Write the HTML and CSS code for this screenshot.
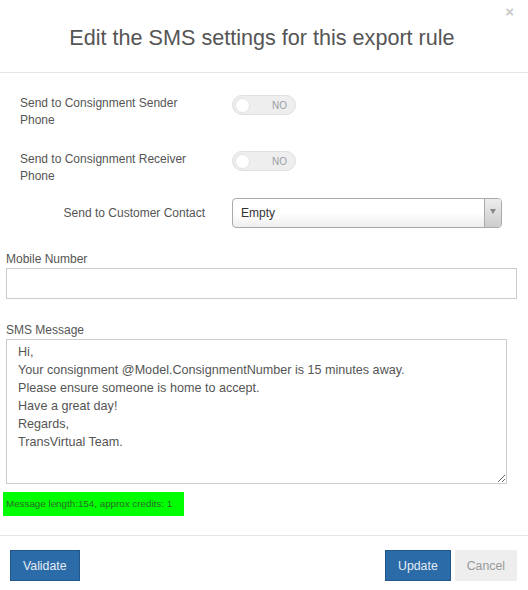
FILE: index.html
```html
<!DOCTYPE html>
<html>
<head>
<meta charset="utf-8">
<link rel="stylesheet" href="styles.css">
</head>
<body>
<div class="modal">
  <div class="modal-header">
    <h4 class="modal-title">Edit the SMS settings for this export rule</h4>
    <span class="close">×</span>
  </div>
  <div class="modal-body">
    <div class="opt-row">
      <div class="opt-label">Send to Consignment Sender Phone</div>
      <div class="toggle"><span class="knob"></span><span class="toggle-text">NO</span></div>
    </div>
    <div class="opt-row">
      <div class="opt-label">Send to Consignment Receiver Phone</div>
      <div class="toggle"><span class="knob"></span><span class="toggle-text">NO</span></div>
    </div>
    <div class="opt-row opt-row-center">
      <div class="opt-label opt-label-right">Send to Customer Contact</div>
      <div class="select">
        <span class="select-value">Empty</span>
        <span class="select-arrow"><span class="tri"></span></span>
      </div>
    </div>
    <label class="field-label">Mobile Number</label>
    <div class="input"></div>
    <label class="field-label">SMS Message</label>
    <textarea class="textarea">Hi,
Your consignment @Model.ConsignmentNumber is 15 minutes away.
Please ensure someone is home to accept.
Have a great day!
Regards,
TransVirtual Team.</textarea>
    <div class="msg-info">Message length:154, approx credits: 1</div>
  </div>
  <div class="modal-footer">
    <button class="btn btn-primary">Validate</button>
    <div class="footer-right">
      <button class="btn btn-primary">Update</button>
      <button class="btn btn-default">Cancel</button>
    </div>
  </div>
</div>
</body>
</html>
```
FILE: styles.css
```css
* { box-sizing: border-box; }
body {
  margin: 0;
  background: #fff;
  font-family: "Liberation Sans", Arial, sans-serif;
  color: #555;
}
.modal { width: 528px; }
.modal-header {
  position: relative;
  height: 73px;
  border-bottom: 1px solid #e5e5e5;
  display: flex;
  align-items: center;
  justify-content: center;
}
.modal-title {
  margin: 0;
  font-size: 21.6px;
  font-weight: normal;
  color: #555;
  padding-top: 4px;
  padding-right: 4px;
}
.close {
  position: absolute;
  right: 14px;
  top: 3px;
  font-size: 15px;
  color: #c8c8c8;
  font-weight: bold;
}
.modal-body {
  padding: 22px 11px 19px 6px;
}
.opt-row {
  display: grid;
  grid-template-columns: 200px 1fr;
  column-gap: 12px;
  padding-left: 14px;
  align-items: start;
  margin-bottom: 22px;
}
.opt-row-center { align-items: center; margin-top: -9px; margin-bottom: 0; }
.opt-label {
  font-size: 12px;
  line-height: 17px;
  color: #555;
  padding-right: 25px;
}
.opt-label-right { text-align: right; padding-right: 15px; }
.toggle {
  width: 64px;
  height: 20px;
  border: 1px solid #e0e0e0;
  background: #eee;
  border-radius: 10px;
  display: flex;
  align-items: center;
  justify-content: space-between;
  padding: 0 8px 0 2px;
}
.knob {
  width: 15px;
  height: 15px;
  border-radius: 50%;
  background: #fff;
  border: 1px solid #e2e2e2;
}
.toggle-text {
  font-size: 10px;
  color: #9aa0a8;
}
.select {
  width: 270px;
  height: 30px;
  border: 1px solid #aaa;
  border-radius: 4px;
  background: linear-gradient(#fff 0%, #fff 50%, #eee 100%);
  display: flex;
  align-items: center;
  justify-content: space-between;
  overflow: hidden;
}
.select-value {
  font-size: 12px;
  color: #333;
  padding-left: 8px;
}
.select-arrow {
  width: 17px;
  height: 100%;
  border-left: 1px solid #aaa;
  background: linear-gradient(#eee, #ccc);
  display: flex;
  align-items: center;
  justify-content: center;
}
.tri {
  width: 0;
  height: 0;
  border-left: 3px solid transparent;
  border-right: 3px solid transparent;
  border-top: 5px solid #888;
  margin-top: -4px;
}
.field-label {
  display: block;
  font-size: 12px;
  line-height: 16px;
  color: #555;
  margin-top: 23px;
  margin-bottom: 1px;
}
.input {
  width: 511px;
  height: 31px;
  border: 1px solid #ccc;
  background: #fff;
}
.textarea {
  display: block;
  width: 501px;
  height: 145px;
  border: 1px solid #ccc;
  margin: 0;
  padding: 3px 10px 0 11px;
  font-family: "Liberation Sans", Arial, sans-serif;
  font-size: 12.6px;
  line-height: 18px;
  color: #555;
  resize: both;
}
.msg-info {
  display: inline-block;
  margin: 8px 0 0 -3px;
  height: 24px;
  line-height: 24px;
  padding: 0 12px 0 3px;
  background: #00ff00;
  font-size: 9.8px;
  color: #2a6a2a;
  vertical-align: top;
}
.modal-footer {
  border-top: 1px solid #e5e5e5;
  padding: 14px 11px 9px 10px;
  display: flex;
  justify-content: space-between;
}
.footer-right { display: flex; gap: 4px; }
.btn {
  height: 31px;
  padding: 0 12px;
  font-family: "Liberation Sans", Arial, sans-serif;
  font-size: 12.3px;
  border: 1px solid transparent;
  margin: 0;
}
.btn-primary {
  background: #2a6ba8;
  border-color: #22578c;
  color: #e6edf5;
}
.btn-default {
  background: #eee;
  border-color: #eee;
  color: #999;
  padding: 0 11px;
}
```
